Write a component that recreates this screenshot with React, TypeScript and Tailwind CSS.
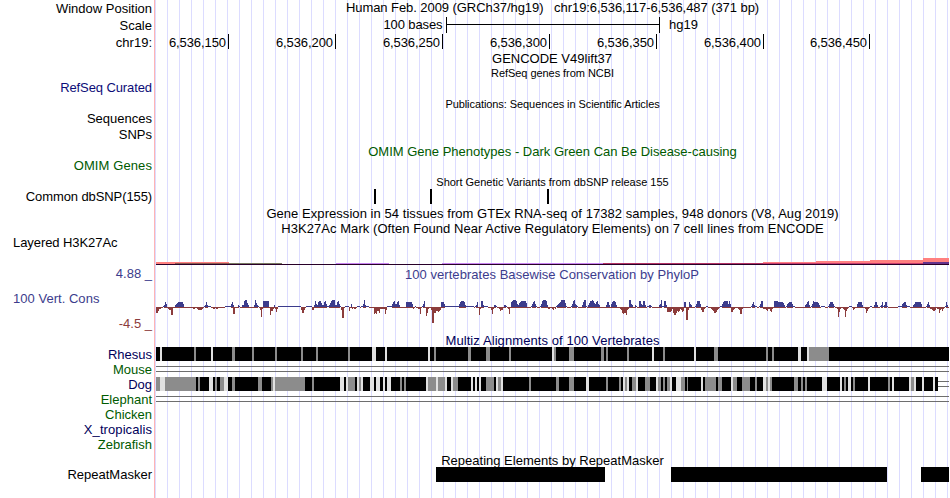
import React from "react";

const LEFT = 155;
const WIDTH = 795;

type LabelItem = { text: string; cls: string };

const labels: LabelItem[] = [
  { text: "Window Position", cls: "mt-px" },
  { text: "Scale", cls: "mt-[2px]" },
  { text: "chr19:", cls: "mt-[2px]" },
  { text: "RefSeq Curated", cls: "mt-[30px] tracking-[-0.1px] text-[#0c0c78]" },
  { text: "Sequences", cls: "mt-4" },
  { text: "SNPs", cls: "mt-px" },
  { text: "OMIM Genes", cls: "mt-4 tracking-[0.1px] text-[#005a00]" },
  { text: "Common dbSNP(155)", cls: "mt-4 tracking-[-0.1px]" },
  { text: "Layered H3K27Ac", cls: "mt-[31px] self-start pl-[13px] tracking-[-0.07px]" },
  { text: "4.88 _", cls: "mt-4 text-[#3c3c8c]" },
  { text: "100 Vert. Cons", cls: "mt-2.5 self-start pl-[13px] tracking-[0.03px] text-[#3c3c8c]" },
  { text: "-4.5 _", cls: "mt-2.5 text-[#8c3c3c]" },
  { text: "Rhesus", cls: "mt-4 text-[#00005a]" },
  { text: "Mouse", cls: "text-[#005a00]" },
  { text: "Dog", cls: "text-[#00005a]" },
  { text: "Elephant", cls: "text-[#005a00]" },
  { text: "Chicken", cls: "text-[#005a00]" },
  { text: "X_tropicalis", cls: "tracking-[0.08px] text-[#00005a]" },
  { text: "Zebrafish", cls: "text-[#005a00]" },
  { text: "RepeatMasker", cls: "mt-[15px]" },
];

const ticks: LabelItem[] = [
  { text: "6,536,150", cls: "w-[74px]" },
  { text: "6,536,200", cls: "w-[107px]" },
  { text: "6,536,250", cls: "w-[107px]" },
  { text: "6,536,300", cls: "w-[107px]" },
  { text: "6,536,350", cls: "w-[107px]" },
  { text: "6,536,400", cls: "w-[107px]" },
  { text: "6,536,450", cls: "w-[106px]" },
];

// Per-base scores: digits rise above the axis, letters (A=1, B=2, ...) fall below it.
const scores: [number, string][] = [
  [156, "FFDBB"], [163, "1253"], [168, "BCCHHA"], [175, "234555553"], [193, "BBAABCCCCB"],
  [204, "12521"], [209, "11AABBABBA"], [225, "111111352"], [233, "GG"], [238, "21"],
  [242, "2267742"], [254, "27421"], [259, "ACJB"], [263, "666666"], [269, "AHDDB"],
  [274, "2BEB"], [278, "11111111111111111111111"], [301, "CFFC"], [306, "111111"], [312, "CC"],
  [314, "263256642256311246777225631"], [341, "CKKA1111"], [349, "DA3B"], [354, "BB"],
  [357, "111"], [361, "11372111"], [374, "GFGDDFBBBBBGC"], [387, "1111135633562"],
  [406, "5555553"], [413, "BA1"], [418, "BBGA"], [422, "136A"], [426, "IFBAACPPFFDDEDC"],
  [441, "555311111111111111"], [459, "3566652"], [466, "11111111"], [475, "125A"], [479, "HB"],
  [481, "6621111"], [491, "CGB221"], [499, "BDCC"], [504, "221"], [508, "BG"],
  [511, "5677763245666664"], [531, "135631"], [540, "13677762"], [548, "BBAABCAB"],
  [556, "12345777741"], [571, "1367321"], [582, "25771"], [588, "246676435632"],
  [606, "2552"], [611, "356652"], [620, "BCFGFFHCB"], [629, "7732"], [635, "21"],
  [639, "6632662"], [647, "11221"], [659, "23711662"], [667, "EEEED"], [672, "BFHHFDED"],
  [680, "BCED55MMC532"], [695, "136663CEEB"], [706, "11"], [711, "BCDFFECB"],
  [720, "11356666363"], [731, "EECB"], [738, "BCGGB"], [751, "135211"], [759, "1366"],
  [763, "BBBCDBBDEB"], [774, "66665555542"], [786, "134555311"], [805, "23562"],
  [811, "136555542"], [821, "1111"], [828, "1355531"], [837, "BJEB"], [843, "BCJDB"],
  [849, "111"], [853, "CB"], [857, "355552"], [865, "BFDB"], [870, "11"], [874, "2552"],
  [880, "1251"], [884, "2551"], [898, "111134552111"], [913, "235555553"], [926, "1352"],
  [930, "BBCDDC"], [937, "BBFCB"], [942, "DB"], [945, "152"],
];

type Block = [number, number, number?];

// [start, width, shade]; shade 1 is gray, shade 0 is light
const rhesus: Block[] = [
  [160, 2, 0], [194, 2, 1], [211, 2, 0], [232, 3, 1], [252, 2, 1], [275, 2, 1], [301, 2, 1],
  [316, 2, 1], [348, 2, 1], [372, 4, 0], [385, 2, 0], [428, 2, 0], [434, 2, 1], [468, 3, 1],
  [486, 4, 1], [509, 2, 1], [552, 2, 0], [554, 2, 1], [569, 5, 1], [601, 3, 1], [606, 2, 1],
  [627, 2, 1], [652, 2, 0], [663, 2, 1], [694, 2, 0], [714, 4, 1], [766, 2, 1], [772, 2, 1],
  [798, 3, 0], [807, 2, 0], [809, 20, 1],
];

const dog: Block[] = [
  [156, 4, 1], [160, 5, 0], [165, 31, 1], [198, 2, 1], [209, 4, 0], [215, 2, 1], [220, 4, 1],
  [224, 4, 0], [232, 3, 1], [258, 4, 1], [271, 2, 1], [273, 2, 0], [275, 30, 1], [312, 2, 1],
  [340, 4, 0], [346, 2, 0], [348, 7, 1], [357, 2, 0], [359, 2, 1], [361, 2, 0], [370, 4, 0],
  [376, 4, 0], [383, 2, 0], [387, 4, 0], [400, 2, 1], [404, 2, 1], [426, 2, 0], [428, 8, 1],
  [436, 2, 0], [438, 7, 1], [445, 2, 0], [451, 2, 0], [453, 5, 1], [471, 2, 0], [475, 2, 0],
  [479, 2, 0], [486, 8, 1], [496, 2, 0], [498, 3, 1], [501, 2, 0], [529, 2, 1], [556, 3, 1],
  [569, 5, 1], [586, 3, 0], [606, 2, 1], [619, 2, 1], [623, 2, 0], [625, 2, 1], [627, 2, 0],
  [632, 4, 1], [636, 2, 0], [645, 5, 1], [656, 2, 0], [658, 3, 1], [663, 2, 1], [667, 3, 1],
  [670, 2, 0], [676, 5, 0], [681, 4, 1], [687, 1, 1], [701, 2, 0], [705, 11, 1], [718, 4, 1],
  [731, 2, 0], [733, 4, 1], [742, 8, 1], [755, 2, 1], [763, 3, 0], [766, 2, 1], [768, 2, 0],
  [770, 2, 1], [794, 4, 1], [801, 2, 1], [805, 2, 1], [822, 5, 0], [840, 2, 0], [844, 2, 1],
  [848, 3, 0], [853, 2, 1], [868, 2, 0], [888, 2, 1], [892, 2, 0], [909, 2, 0], [911, 3, 1],
  [914, 2, 0], [922, 2, 0], [933, 2, 0],
];

const signal: [number, number, number, number, string][] = [
  [156, 229, 262, 2, "#ff8080"], [175, 229, 263, 1, "#8c5a50"], [229, 282, 263, 1, "#787860"],
  [336, 389, 263, 1, "#c882f0"], [442, 603, 263, 1, "#c882f0"], [603, 763, 263, 1, "#b43264"],
  [763, 816, 262, 2, "#ff8080"], [816, 870, 261, 3, "#ff8080"], [870, 923, 260, 4, "#ff8080"],
  [923, 949, 258, 5, "#ff8080"], [763, 923, 263, 1, "#c83c6e"], [923, 949, 262, 2, "#64328c"],
  [156, 949, 264, 1, "#280028"],
];

function Plot({ top, height, cls = "", children }: { top: number; height: number; cls?: string; children: React.ReactNode }) {
  return (
    <svg
      className={`block shrink-0 ${cls}`}
      width={WIDTH}
      height={height}
      viewBox={`${LEFT} ${top} ${WIDTH} ${height}`}
      shapeRendering="crispEdges"
    >
      {children}
    </svg>
  );
}

function Title({ children, cls = "" }: { children: React.ReactNode; cls?: string }) {
  return <div className={`h-[15px] shrink-0 text-center leading-[15px] whitespace-pre ${cls}`}>{children}</div>;
}

function SmallTitle({ children, cls = "" }: { children: React.ReactNode; cls?: string }) {
  return <div className={`h-[13px] shrink-0 text-center text-[11px] leading-[13px] whitespace-pre ${cls}`}>{children}</div>;
}

function Conservation() {
  let up = "";
  let down = "";
  const covered = new Set<number>();
  for (const [start, run] of scores) {
    run.split("").forEach((c, i) => {
      const x = start + i;
      covered.add(x);
      if (c >= "A") {
        down += `M${x} 307h1v${c.charCodeAt(0) - 64}h-1z`;
      } else {
        up += `M${x} 307h1v-${c}h-1z`;
        if (Number(c) > 1) down += `M${x} 307h1v1h-1z`;
      }
    });
  }
  for (let x = 156; x < 949; x++) if (!covered.has(x)) down += `M${x} 307h1v1h-1z`;
  return (
    <Plot top={297} height={29} cls="mt-[15px]">
      <path d={up} fill="#3c3c8c" />
      <path d={down} fill="#8c3c3c" />
    </Plot>
  );
}

function Gap({ from = 156 }: { from?: number }) {
  return (
    <>
      <rect x={from} y={4} width={949 - from} height={1} fill="#6e6e6e" />
      <rect x={from} y={9} width={949 - from} height={1} fill="#6e6e6e" />
    </>
  );
}

function Alignment({ blocks, end }: { blocks: Block[]; end: number }) {
  return (
    <>
      <rect x={156} y={0} width={end - 156} height={14} fill="#000" />
      {blocks.map(([x, w, shade]) => (
        <rect key={x} x={x} y={0} width={w} height={14} fill={shade ? "#8c8c8c" : "#e1e1e1"} />
      ))}
    </>
  );
}

export default function App() {
  return (
    <div className="flex h-[498px] w-[950px] overflow-hidden bg-white font-['Liberation_Sans',Arial,sans-serif] text-[13px] text-black">
      <div className="flex w-[154px] shrink-0 flex-col items-end pr-[2px]">
        {labels.map((l) => (
          <div key={l.text} className={`h-[15px] shrink-0 leading-[15px] whitespace-pre ${l.cls}`}>
            {l.text}
          </div>
        ))}
      </div>
      <div className="w-px shrink-0 bg-[#ffb4b4]" />
      <div className="flex w-[795px] shrink-0 flex-col bg-[linear-gradient(to_right,transparent_0,transparent_11px,#dcdcff_11px,#dcdcff_12px)] bg-[length:12px_100%] bg-[position:1px_0]">
        <Title cls="tracking-[-0.065px]">Human Feb. 2009 (GRCh37/hg19)   chr19:6,536,117-6,536,487 (371 bp)</Title>
        <div className="mt-[2px] flex h-4 shrink-0 leading-[15px]">
          <div className="w-[287.5px] text-right tracking-[-0.1px]">100 bases</div>
          <div className="ml-[3.5px] flex w-[214px] items-center border-x border-black">
            <div className="-mt-px h-px w-full bg-black" />
          </div>
          <div className="ml-[9px]">hg19</div>
        </div>
        <div className="mt-px flex h-[15px] shrink-0">
          {ticks.map((t) => (
            <div key={t.text} className={`border-r border-black pt-px pr-[2px] text-right leading-[15px] tracking-[-0.08px] ${t.cls}`}>
              {t.text}
            </div>
          ))}
        </div>
        <Title cls="mt-[2px] pr-px">GENCODE V49lift37</Title>
        <SmallTitle cls="mt-px tracking-[-0.05px]">RefSeq genes from NCBI</SmallTitle>
        <SmallTitle cls="mt-[18px] tracking-[-0.075px]">Publications: Sequences in Scientific Articles</SmallTitle>
        <Title cls="mt-[33px] text-[#005a00]">OMIM Gene Phenotypes - Dark Green Can Be Disease-causing</Title>
        <SmallTitle cls="mt-[17px] tracking-[-0.02px]">Short Genetic Variants from dbSNP release 155</SmallTitle>
        <Plot top={0} height={15}>
          {[374, 430, 547].map((x) => (
            <rect key={x} x={x} y={0} width={2} height={15} />
          ))}
        </Plot>
        <Title cls="mt-[2px] tracking-[0.055px]">Gene Expression in 54 tissues from GTEx RNA-seq of 17382 samples, 948 donors (V8, Aug 2019)</Title>
        <Title cls="tracking-[0.058px]">H3K27Ac Mark (Often Found Near Active Regulatory Elements) on 7 cell lines from ENCODE</Title>
        <Plot top={258} height={7} cls="mt-[22px]">
          {signal.map(([a, b, y, h, fill], i) => (
            <rect key={i} x={a} y={y} width={b - a} height={h} fill={fill} />
          ))}
        </Plot>
        <Title cls="mt-[2px] pr-px tracking-[0.04px] text-[#3c3c8c]">100 vertebrates Basewise Conservation by PhyloP</Title>
        <Conservation />
        <Title cls="mt-[7px] tracking-[0.085px] text-[#00005a]">Multiz Alignments of 100 Vertebrates</Title>
        <Plot top={0} height={15} cls="-mt-px">
          <Alignment blocks={rhesus} end={949} />
        </Plot>
        <Plot top={0} height={15}>
          <Gap />
        </Plot>
        <Plot top={0} height={15}>
          <Alignment blocks={dog} end={938} />
          <Gap from={938} />
        </Plot>
        <Plot top={0} height={15}>
          <Gap />
        </Plot>
        <Title cls="mt-[46px]">Repeating Elements by RepeatMasker</Title>
        <Plot top={0} height={15} cls="-mt-px">
          <rect x={436} y={0} width={169} height={15} />
          <rect x={671} y={0} width={216} height={15} />
          <rect x={921} y={0} width={28} height={15} />
        </Plot>
      </div>
    </div>
  );
}
